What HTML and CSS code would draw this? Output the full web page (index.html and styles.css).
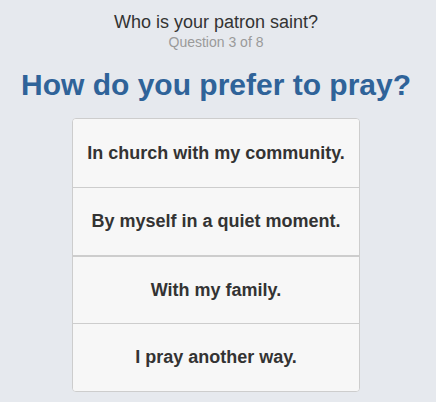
FILE: index.html
```html
<!DOCTYPE html>
<html>
<head>
<meta charset="utf-8">
<link rel="stylesheet" href="styles.css">
</head>
<body>
<div class="quiz">
  <div class="quiz-title">Who is your patron saint?</div>
  <div class="quiz-progress">Question 3 of 8</div>
  <h1 class="question">How do you prefer to pray?</h1>
  <div class="answers">
    <button class="answer">In church with my community.</button>
    <button class="answer">By myself in a quiet moment.</button>
    <button class="answer answer-thick">With my family.</button>
    <button class="answer">I pray another way.</button>
  </div>
</div>
</body>
</html>
```
FILE: styles.css
```css
html, body {
  margin: 0;
  padding: 0;
  background: #e6e9ee;
  font-family: "Liberation Sans", Arial, sans-serif;
}
.quiz {
  display: flex;
  flex-direction: column;
  align-items: center;
  padding: 10px 4px 0 0;
}
.quiz-title {
  font-size: 18px;
  line-height: 24px;
  color: #333;
}
.quiz-progress {
  font-size: 14px;
  line-height: 16px;
  color: #9a9a9a;
}
.question {
  margin: 15px 0 0;
  font-size: 30px;
  line-height: 40px;
  font-weight: bold;
  color: #2f6399;
}
.answers {
  box-sizing: border-box;
  margin-top: 13px;
  width: 288px;
  display: flex;
  flex-direction: column;
  border: 1px solid #cdcdcd;
  border-radius: 4px;
  background: #f7f7f7;
  overflow: hidden;
}
.answer {
  height: 68px;
  border: 0;
  border-top: 1px solid #cdcdcd;
  background: #f7f7f7;
  font-family: inherit;
  font-size: 18px;
  font-weight: bold;
  color: #333;
  padding: 0;
}
.answer:first-child {
  border-top: 0;
}
.answer-thick {
  border-top: 2px solid #cdcdcd;
}
```
